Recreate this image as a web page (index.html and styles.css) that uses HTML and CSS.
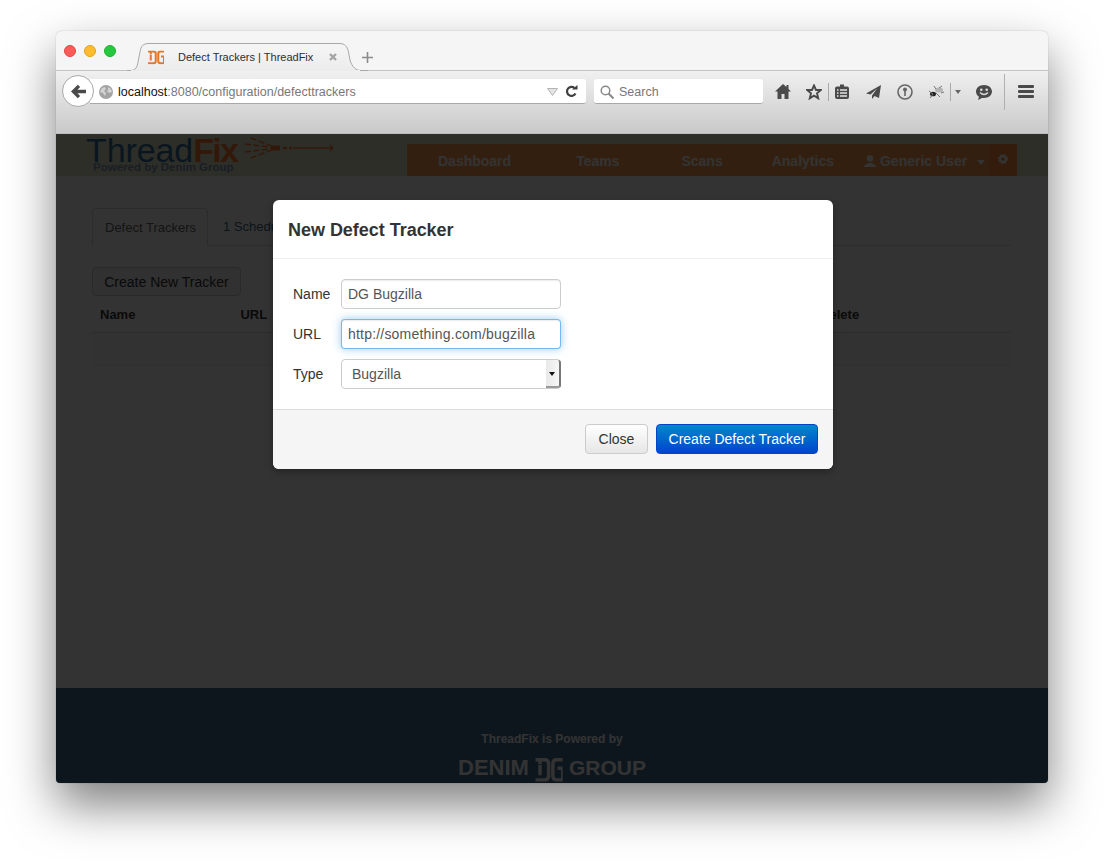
FILE: index.html
```html
<!DOCTYPE html>
<html lang="en">
<head>
<meta charset="utf-8">
<title>Defect Trackers | ThreadFix</title>
<link rel="stylesheet" href="styles.css">
</head>
<body>
<svg class="defs" width="0" height="0" aria-hidden="true">
  <symbol id="dg-mark" viewBox="0 0 32 28">
    <path d="M0 2H11Q15.500 2 15.500 6.500V21Q15.500 25.500 11 25.500H0M5.500 2V7M5.500 8V20M32 2H25Q20.500 2 20.500 6.500V21Q20.500 25.500 25 25.500H32V12H26" fill="none" stroke="currentColor" stroke-width="4"/>
  </symbol>
</svg>
<div class="window">
  <div class="tabstrip">
    <div class="traffic">
      <span class="light light-red"></span>
      <span class="light light-yellow"></span>
      <span class="light light-green"></span>
    </div>
    <div class="browser-tab">
      <svg class="tab-shape" width="241" height="28" viewBox="0 0 241 28">
        <defs><linearGradient id="tabfill" x1="0" y1="0" x2="0" y2="1"><stop offset="0" stop-color="#f6f6f6"/><stop offset="1" stop-color="#ececec"/></linearGradient></defs>
        <path d="M0 27.500H3C9 27.500 10 24 11 19L13 9C14 3 16 .5 22 .5H212C218 .5 220 3 221.500 9L223 17C225 24 229 27.500 234 27.500H241" fill="url(#tabfill)" stroke="#a8a8a8"/>
        <rect x="4" y="27" width="229" height="2" fill="#ececec"/>
      </svg>
      <svg class="favicon" width="16" height="15" viewBox="0 0 32 28"><use href="#dg-mark"/></svg>
      <span class="tab-title">Defect Trackers | ThreadFix</span>
      <svg class="tab-close" width="8" height="8" viewBox="0 0 8 8"><path d="M1 1L7 7M7 1L1 7" stroke="#a4a4a4" stroke-width="2.400"/></svg>
    </div>
    <svg class="new-tab" width="11" height="11" viewBox="0 0 11 11"><path d="M5.500 0V11M0 5.500H11" stroke="#8b8b8b" stroke-width="1.600"/></svg>
  </div>
  <div class="toolbar">
    <div class="back-button">
      <svg width="15" height="15" viewBox="0 0 16 16"><path d="M8.500 2L2.500 8L8.500 14M3 8H16" fill="none" stroke="#4a4a4a" stroke-width="3.600"/></svg>
    </div>
    <div class="urlbar">
      <svg class="globe" width="14" height="14" viewBox="0 0 14 14"><circle cx="7" cy="7" r="7" fill="#a3a3a3"/><path d="M3 3l3-1 1 2-2 2 2 2-1 3-2-3-3-1zM9 2l3 2 1 3-3 1-2-2 1-1z" fill="#d2d2d2"/></svg>
      <span class="url"><span class="url-host">localhost</span>:8080/configuration/defecttrackers</span>
      <svg class="url-drop" width="11" height="8" viewBox="0 0 11 8"><path d="M.5.500H10.500L5.500 7.500Z" fill="#e4e4e4" stroke="#b4b4b4"/></svg>
      <svg class="reload" width="13" height="13" viewBox="0 0 13 13"><path d="M10.500 8.500A4.500 4.500 0 1 1 9.500 3" fill="none" stroke="#3f3f3f" stroke-width="2.200"/><path d="M7 4.500H12.500V0Z" fill="#3f3f3f"/></svg>
    </div>
    <div class="searchbar">
      <svg width="14" height="14" viewBox="0 0 14 14"><circle cx="5.500" cy="5.500" r="4.300" fill="none" stroke="#8a8a8a" stroke-width="1.500"/><path d="M8.500 8.500L13.500 13.500" stroke="#8a8a8a" stroke-width="2"/></svg>
      <span class="search-text">Search</span>
    </div>
    <div class="tools">
      <svg class="tool tool-home" width="16" height="15" viewBox="0 0 16 15"><path d="M8 0L0 7.500H2.500V15H6.500V10H9.500V15H13.500V7.500H16L13.500 5V1H11.500V3Z" fill="#4a4a4a"/></svg>
      <svg class="tool tool-star" width="16" height="16" viewBox="0 0 16 16"><path d="M8 1.500L10 6H14.800L11 9.300L12.200 14.300L8 11.600L3.800 14.300L5 9.300L1.200 6H6Z" fill="none" stroke="#4a4a4a" stroke-width="1.900"/></svg>
      <span class="tool-sep sep-a"></span>
      <svg class="tool tool-clip" width="14" height="15" viewBox="0 0 14 15"><path d="M2 2.500H5V.5H9V2.500H12Q14 2.500 14 4.500V13Q14 15 12 15H2Q0 15 0 13V4.500Q0 2.500 2 2.500Z" fill="#4a4a4a"/><path d="M2 6H3.500M5 6H12M2 9H3.500M5 9H12M2 12H3.500M5 12H12" stroke="#e4e4e4" stroke-width="1.300"/></svg>
      <svg class="tool tool-plane" width="15" height="14" viewBox="0 0 15 14"><path d="M15 0L0 8.500L4.500 9.500L11 3.500L6 10.500V14L8.500 11L13 13Z" fill="#4a4a4a"/></svg>
      <svg class="tool tool-key" width="16" height="16" viewBox="0 0 16 16"><circle cx="8" cy="8" r="7" fill="none" stroke="#666" stroke-width="1.600"/><circle cx="8" cy="5.500" r="2" fill="#666"/><path d="M7.200 6H8.800V12H7.200Z" fill="#666"/></svg>
      <svg class="tool tool-bug" width="16" height="14" viewBox="0 0 16 14"><ellipse cx="5" cy="9" rx="3" ry="2.300" fill="#222"/><ellipse cx="11" cy="5" rx="4" ry="2.500" fill="#b5b5b5"/><path d="M2 13L5 9L1 6M8 8L12 12M8 4L6 1M11 3L14 1M13 8L16 7" fill="none" stroke="#777"/></svg>
      <span class="tool-sep sep-b"></span>
      <span class="tool-caret"></span>
      <svg class="tool tool-smile" width="16" height="16" viewBox="0 0 16 16"><path d="M8 1C12.400 1 16 3.800 16 7.500S12.400 14 8 14H6L2 16L3 12.800C1 11.500 0 9.700 0 7.500C0 3.800 3.600 1 8 1Z" fill="#4a4a4a"/><circle cx="5.300" cy="5.800" r="1.300" fill="#ddd"/><circle cx="10.700" cy="5.800" r="1.300" fill="#ddd"/><path d="M4 8.500Q8 12.500 12 8.500" fill="none" stroke="#ddd" stroke-width="1.300"/></svg>
      <span class="tool-sep sep-c"></span>
      <span class="hamburger"><span></span><span></span><span></span></span>
    </div>
  </div>
  <div class="page">
    <header class="site-header">
      <div class="logo">
        <div class="logo-row">
          <span class="logo-word">Thread<span class="logo-fix">Fix</span></span>
          <svg class="logo-arrow" width="98" height="26" viewBox="0 0 98 26">
            <path d="M8 3L34 13M2 9L34 13M2 17L34 13M8 23L34 13" fill="none" stroke="#ff7a30" stroke-width="1.500" stroke-dasharray="6 2.500"/>
            <path d="M29 13H37" stroke="#ff7a30" stroke-width="5"/>
            <path d="M40 13H44M46 13H49" stroke="#ff7a30" stroke-width="2.400"/>
            <path d="M50 13H90M87 10L90 13L87 16" fill="none" stroke="#ff7a30" stroke-width="1.300"/>
          </svg>
        </div>
        <div class="logo-sub">Powered by Denim Group</div>
      </div>
      <nav class="main-nav">
        <span class="nav-item nav-dashboard">Dashboard</span>
        <span class="nav-item nav-teams">Teams</span>
        <span class="nav-item nav-scans">Scans</span>
        <span class="nav-item nav-analytics">Analytics</span>
        <span class="nav-item nav-user">
          <svg width="12" height="12" viewBox="0 0 12 12"><circle cx="6" cy="3.500" r="3.300" fill="#fff"/><path d="M0 12V10.500L4 8H8L12 10.500V12Z" fill="#fff"/></svg>
          Generic User
          <span class="nav-caret"></span>
        </span>
        <span class="nav-gear">
          <svg width="10" height="10" viewBox="0 0 10 10"><circle cx="5" cy="5" r="3" fill="none" stroke="#fff" stroke-width="2.400"/><circle cx="5" cy="5" r="4.400" fill="none" stroke="#fff" stroke-width="1.200" stroke-dasharray="1.700 1.760"/></svg>
        </span>
      </nav>
    </header>
    <main class="content">
      <div class="page-tabs">
        <span class="page-tab page-tab-active">Defect Trackers</span>
        <span class="page-tab">1 Scheduled Update</span>
      </div>
      <button class="btn-create" type="button">Create New Tracker</button>
      <div class="table-head">
        <span class="th th-name">Name</span>
        <span class="th th-url">URL</span>
        <span class="th th-delete">Delete</span>
      </div>
      <div class="table-row"></div>
    </main>
    <footer class="site-footer">
      <div class="footer-text">ThreadFix is Powered by</div>
      <div class="footer-logo">
        <span>DENIM</span>
        <svg class="footer-mark" width="28" height="24" viewBox="0 0 32 28"><use href="#dg-mark"/></svg>
        <span class="footer-group">GROUP</span>
      </div>
    </footer>
    <div class="backdrop">
      <div class="modal">
        <div class="modal-header"><h3 class="modal-title">New Defect Tracker</h3></div>
        <div class="modal-body">
          <div class="form-row">
            <label class="form-label" for="f-name">Name</label>
            <input class="form-input" id="f-name" type="text" value="DG Bugzilla">
          </div>
          <div class="form-row">
            <label class="form-label" for="f-url">URL</label>
            <input class="form-input form-input-focus" id="f-url" type="text" value="http://something.com/bugzilla">
          </div>
          <div class="form-row">
            <label class="form-label" for="f-type">Type</label>
            <div class="select-wrap">
              <select class="form-select" id="f-type"><option>Bugzilla</option></select>
              <span class="select-arrow"></span>
            </div>
          </div>
        </div>
        <div class="modal-footer">
          <button class="btn btn-close" type="button">Close</button>
          <button class="btn btn-primary" type="button">Create Defect Tracker</button>
        </div>
      </div>
    </div>
  </div>
</div>
</body>
</html>
```

FILE: styles.css
```css
* { box-sizing: border-box; }
html, body { margin: 0; height: 100%; }
body {
  background: #fff;
  padding: 31px 56px 0;
  overflow: hidden;
  font-family: "Liberation Sans", Arial, sans-serif;
}
.defs { position: absolute; }
.window {
  width: 992px;
  height: 752px;
  border-radius: 6px 6px 4px 4px;
  box-shadow: 0 0 1px rgba(0,0,0,.45), 0 22px 48px rgba(0,0,0,.5);
  display: flex;
  flex-direction: column;
  overflow: hidden;
  background: #f5f5f5;
}

/* tab strip */
.tabstrip {
  height: 40px;
  flex: none;
  display: flex;
  position: relative;
  background: #f5f5f5;
  border-bottom: 1px solid #c2c2c2;
}
.traffic { display: flex; gap: 8px; padding: 14px 0 0 8px; }
.light { width: 12px; height: 12px; border-radius: 50%; }
.light-red { background: #fc5b57; border: 1px solid #e5453f; }
.light-yellow { background: #fdbb2e; border: 1px solid #e5a21e; }
.light-green { background: #27c840; border: 1px solid #1eb02f; }
.browser-tab {
  position: relative;
  width: 218px;
  height: 28px;
  margin: 12px 0 0 18px;
  display: flex;
  align-items: center;
}
.tab-shape { position: absolute; left: -7px; top: 0; }
.favicon { position: relative; margin-left: 14px; color: #e3772a; }
.tab-title { position: relative; margin-left: 14px; font-size: 11px; color: #2b2f38; white-space: nowrap; }
.tab-close { position: relative; margin-left: 16px; }
.new-tab { position: relative; margin: 21px 0 0 10px; }

/* toolbar */
.toolbar {
  height: 63px;
  flex: none;
  position: relative;
  background: linear-gradient(#f0f0f0, #c9c9c9);
  border-bottom: 1px solid #bdbdbd;
  display: flex;
  align-items: flex-start;
  padding: 8px 0 0 34px;
}
.back-button {
  position: absolute;
  left: 6px;
  top: 4px;
  width: 32px;
  height: 32px;
  border-radius: 50%;
  background: #fff;
  border: 1px solid #a9a9a9;
  display: flex;
  align-items: center;
  justify-content: center;
  z-index: 1;
}
.urlbar {
  width: 496px;
  height: 25px;
  background: #fff;
  border-bottom: 1px solid #a8a8a8;
  border-radius: 0 3px 3px 0;
  display: flex;
  align-items: center;
  padding: 1px 0 0 9px;
}
.url {
  margin-left: 5px;
  font-size: 12.500px;
  color: #777;
  white-space: nowrap;
}
.url-host { color: #111; }
.url-drop { margin-left: auto; }
.reload { margin: 0 8px 0 7px; }
.searchbar {
  width: 169px;
  height: 25px;
  margin-left: 8px;
  background: #fff;
  border-bottom: 1px solid #a8a8a8;
  border-radius: 3px;
  display: flex;
  align-items: center;
  padding: 1px 0 0 6px;
}
.search-text { margin-left: 5px; font-size: 12.500px; color: #777; }
.tools { display: flex; align-items: center; height: 25px; margin-left: 12px; flex: 1; }
.tool { flex: none; }
.tool-star { margin-left: 15px; }
.tool-sep { flex: none; width: 1px; height: 18px; background: #a9a9a9; }
.sep-a { margin-left: 6px; }
.tool-clip { margin-left: 6px; }
.tool-plane { margin-left: 17px; }
.tool-key { margin-left: 16px; }
.tool-bug { margin-left: 15px; }
.sep-b { margin-left: 6px; }
.tool-caret { flex: none; margin-left: 4px; border: 3.500px solid transparent; border-top: 4px solid #666; border-bottom: 0; }
.tool-smile { margin-left: 15px; }
.sep-c { margin-left: 12px; height: 36px; background: #b0b0b0; }
.hamburger { margin-left: 13px; display: flex; flex-direction: column; gap: 2px; width: 16px; margin-top: -1px; }
.hamburger span { height: 3px; border-radius: 1px; background: #4a4a4a; }

/* page */
.page {
  position: relative;
  flex: 1;
  background: #fff;
  display: flex;
  flex-direction: column;
  overflow: hidden;
}
.site-header {
  height: 42px;
  flex: none;
  background: #e1e6c8;
  display: flex;
  justify-content: space-between;
  padding: 0 31px 0 30px;
}
.logo-row { display: flex; align-items: flex-start; height: 32px; }
.logo-word { font-size: 34px; line-height: 33px; color: #336f9c; white-space: nowrap; letter-spacing: -.1px; }
.logo-fix { font-weight: 700; color: #ff7a30; letter-spacing: -1.700px; }
.logo-arrow { margin: 1px 0 0 6px; }
.logo-sub { margin: -5px 0 0 7px; font-size: 11.500px; font-weight: 700; color: #8295b5; white-space: nowrap; }
.main-nav {
  width: 610px;
  height: 32px;
  margin-top: 10px;
  background: #ff9b4b;
  display: flex;
  align-items: center;
  color: #fff;
  font-size: 14px;
  font-weight: 700;
  white-space: nowrap;
  padding-top: 2px;
}
.nav-dashboard { margin-left: 31px; }
.nav-teams { margin-left: 65px; }
.nav-scans { margin-left: 62px; }
.nav-analytics { margin-left: 49px; }
.nav-user { margin-left: 30px; display: flex; align-items: center; gap: 4px; }
.nav-caret { margin-left: 6px; margin-top: 2px; border: 4.500px solid transparent; border-top: 5px solid #fff; border-bottom: 0; }
.nav-gear {
  margin-left: auto;
  margin-top: -2px;
  width: 28px;
  height: 32px;
  background: #ff8c3c;
  display: flex;
  align-items: center;
  justify-content: center;
  padding-bottom: 2px;
}
.content { flex: 1; padding: 32px 37px 0 36px; min-height: 0; }
.page-tabs { height: 38px; display: flex; border-bottom: 1px solid #ddd; }
.page-tab { height: 38px; padding: 0 12px; line-height: 38px; font-size: 13px; color: #3a6a8a; white-space: nowrap; }
.page-tab-active {
  color: #666;
  background: #fff;
  border: 1px solid #ddd;
  border-bottom-color: #fff;
  border-radius: 4px 4px 0 0;
  margin-right: 3px;
  padding-right: 11px;
}
.btn-create {
  display: block;
  width: 149px;
  height: 29px;
  margin-top: 21px;
  padding: 0;
  border: 1px solid #ccc;
  border-radius: 4px;
  background: #f5f5f5;
  font: 14px "Liberation Sans", Arial, sans-serif;
  color: #333;
}
.table-head {
  height: 37px;
  border-bottom: 1px solid #ddd;
  display: flex;
  align-items: center;
  font-size: 13px;
  font-weight: 700;
  color: #333;
}
.th-name { margin-left: 8px; }
.th-url { margin-left: 105px; }
.th-delete { margin-left: 553px; }
.table-row { height: 33px; background: #f9f9f9; border-bottom: 1px solid #eee; }
.site-footer {
  height: 95px;
  flex: none;
  background: #416e91;
  color: #fff;
  text-align: center;
  padding-top: 44px;
}
.footer-text { font-size: 12px; font-weight: 700; line-height: 14px; }
.footer-logo {
  margin-top: 8px;
  display: flex;
  justify-content: center;
  align-items: flex-start;
  gap: 6px;
  font-size: 22px;
  font-weight: 700;
  line-height: 28px;
}
.footer-mark { margin-top: 4px; }
.footer-group { font-size: 21px; }

/* modal */
.backdrop {
  position: absolute;
  inset: 0;
  background: rgba(0,0,0,.8);
  padding: 66px 0 0 217px;
}
.modal {
  width: 560px;
  height: 269px;
  background: #fff;
  border-radius: 6px;
  box-shadow: 0 3px 7px rgba(0,0,0,.3);
  overflow: hidden;
  display: flex;
  flex-direction: column;
}
.modal-header { height: 59px; flex: none; padding: 2px 15px 0; border-bottom: 1px solid #eee; display: flex; align-items: center; }
.modal-title { margin: 0; font-size: 18px; font-weight: 700; color: #333; letter-spacing: -.03px; }
.modal-body { flex: 1; padding: 20px 0 0 20px; display: flex; flex-direction: column; gap: 10px; }
.form-row { display: flex; align-items: center; height: 30px; }
.form-label { width: 48px; font-size: 14px; color: #333; }
.form-input {
  width: 220px;
  height: 30px;
  padding: 0 6px;
  border: 1px solid #ccc;
  border-radius: 4px;
  font: 14px "Liberation Sans", Arial, sans-serif;
  color: #555;
  box-shadow: inset 0 1px 1px rgba(0,0,0,.075);
}
.form-input-focus {
  border-color: rgba(82,168,236,.8);
  outline: 0;
  letter-spacing: .2px;
  box-shadow: inset 0 1px 1px rgba(0,0,0,.075), 0 0 8px rgba(82,168,236,.6);
}
.select-wrap { position: relative; width: 220px; height: 30px; }
.form-select {
  width: 220px;
  height: 30px;
  padding: 0 10px;
  appearance: none;
  background: #fff;
  border: 1px solid #ccc;
  border-radius: 4px;
  font: 14px "Liberation Sans", Arial, sans-serif;
  color: #555;
}
.select-arrow {
  position: absolute;
  right: 0;
  top: 1px;
  width: 15px;
  height: 28px;
  background: linear-gradient(90deg, #e9e9e9, #f6f6f6);
  border-right: 2px solid #777;
  border-bottom: 2px solid #999;
  border-radius: 0 3px 3px 0;
}
.select-arrow::after {
  content: "";
  position: absolute;
  left: 3px;
  top: 12px;
  border: 3px solid transparent;
  border-top: 4px solid #111;
  border-bottom: 0;
}
.modal-footer {
  height: 60px;
  flex: none;
  background: #f5f5f5;
  border-top: 1px solid #ddd;
  display: flex;
  justify-content: flex-end;
  align-items: center;
  gap: 8px;
  padding: 0 15px 1px;
}
.btn {
  height: 30px;
  padding: 0;
  border-radius: 4px;
  font: 14px "Liberation Sans", Arial, sans-serif;
}
.btn-close {
  width: 63px;
  border: 1px solid #ccc;
  background: linear-gradient(#fff, #e6e6e6);
  color: #333;
}
.btn-primary {
  width: 162px;
  border: 1px solid #04c;
  background: linear-gradient(#08c, #04c);
  color: #fff;
}
```
